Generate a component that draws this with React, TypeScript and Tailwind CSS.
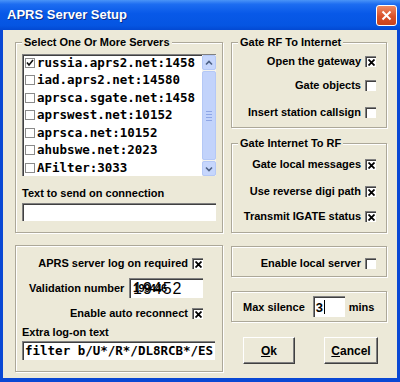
import type { ReactNode } from 'react'

const servers = [
  { name: 'russia.aprs2.net:1458', checked: true },
  { name: 'iad.aprs2.net:14580', checked: false },
  { name: 'aprsca.sgate.net:1458', checked: false },
  { name: 'aprswest.net:10152', checked: false },
  { name: 'aprsca.net:10152', checked: false },
  { name: 'ahubswe.net:2023', checked: false },
  { name: 'AFilter:3033', checked: false },
]

const etched = 'border border-[#aca899] shadow-[1px_1px_0_#fff,inset_1px_1px_0_#fff]'
const sunken =
  'border-t border-l border-[#808080] border-r-white border-b-white shadow-[inset_1px_1px_0_#404040]'

const XBox = ({ checked = false }: { checked?: boolean }) => (
  <span
    className={`inline-flex h-[11px] w-[11px] shrink-0 items-center justify-center bg-white ${sunken}`}
  >
    {checked && (
      <svg width="7" height="7" viewBox="0 0 7 7" className="ml-[1px] mt-[1px]">
        <path d="M0.5 0.5 L6.5 6.5 M6.5 0.5 L0.5 6.5" stroke="#000" strokeWidth="1.8" />
      </svg>
    )}
  </span>
)

const ListCheck = ({ checked }: { checked: boolean }) => (
  <span className="inline-flex h-[10px] w-[10px] shrink-0 items-center justify-center border border-[#8a8a8a] bg-white">
    {checked && (
      <svg width="8" height="8" viewBox="0 0 8 8">
        <path d="M1 3.5 L3 6 L7 1" fill="none" stroke="#111" strokeWidth="1.6" />
      </svg>
    )}
  </span>
)

const CheckRow = ({
  label,
  checked,
  className = '',
}: {
  label: string
  checked?: boolean
  className?: string
}) => (
  <div className={`flex h-[16px] items-center justify-end gap-[4px] ${className}`}>
    <span className="text-[11px] font-bold leading-[14px] text-black">{label}</span>
    <XBox checked={checked} />
  </div>
)

const GroupBox = ({
  title,
  className = '',
  children,
}: {
  title?: string
  className?: string
  children: ReactNode
}) => (
  <div className={`relative ${etched} ${className}`}>
    {title && (
      <span className="absolute -top-[8px] left-[6px] bg-[#ece9d8] px-[2px] text-[11px] font-bold leading-[14px] text-black">
        {title}
      </span>
    )}
    {children}
  </div>
)

const Chevron = ({ down = false }: { down?: boolean }) => (
  <svg width="8" height="6" viewBox="0 0 8 6">
    <path
      d={down ? 'M1 1.5 L4 4.5 L7 1.5' : 'M1 4.5 L4 1.5 L7 4.5'}
      fill="none"
      stroke="#4d6185"
      strokeWidth="1.6"
    />
  </svg>
)

const ScrollBar = () => (
  <div className="flex h-full w-[14px] shrink-0 flex-col bg-[#f4f3ee]">
    <div className="flex h-[15px] items-center justify-center rounded-[2px] border border-[#b4c8f6] bg-[#c6d6fc]">
      <Chevron />
    </div>
    <div className="my-[1px] flex flex-1 flex-col items-center justify-center gap-[2px] rounded-[2px] border border-[#b4c8f6] bg-[#c2d3fb]">
      <span className="h-px w-[6px] bg-[#8ea6e6]" />
      <span className="h-px w-[6px] bg-[#8ea6e6]" />
      <span className="h-px w-[6px] bg-[#8ea6e6]" />
      <span className="h-px w-[6px] bg-[#8ea6e6]" />
    </div>
    <div className="flex h-[15px] items-center justify-center rounded-[2px] border border-[#b4c8f6] bg-[#c6d6fc]">
      <Chevron down />
    </div>
  </div>
)

const Button = ({ first, rest, className = '' }: { first: string; rest: string; className?: string }) => (
  <div
    className={`flex h-[27px] items-center justify-center border border-t-white border-l-white border-r-[#404040] border-b-[#404040] bg-[#ece9d8] shadow-[inset_-1px_-1px_0_#808080] ${className}`}
  >
    <span className="text-[12px] font-bold leading-[14px] text-black">
      <span className="underline">{first}</span>
      {rest}
    </span>
  </div>
)

export default function App() {
  return (
    <div className="flex h-[382px] w-[400px] flex-col overflow-hidden bg-[#0a48d4] font-['Liberation_Sans',Arial,sans-serif]">
      <div className="flex h-[30px] shrink-0 items-center justify-between bg-[linear-gradient(to_bottom,#4a94f7_0%,#1d6df1_14%,#0859e8_45%,#0555e2_85%,#0349d2_100%)] pl-[7px] pr-[3px]">
        <span className="text-[13px] font-bold text-white [text-shadow:1px_1px_0_#0a2f8a]">
          APRS Server Setup
        </span>
        <div className="flex h-[21px] w-[21px] items-center justify-center rounded-[3px] border border-white bg-[linear-gradient(to_bottom,#ee8a64,#d9512a_55%,#c9431d)]">
          <svg width="11" height="11" viewBox="0 0 11 11">
            <path d="M1.5 1.5 L9.5 9.5 M9.5 1.5 L1.5 9.5" stroke="#fff" strokeWidth="2" />
          </svg>
        </div>
      </div>

      <div className="mx-[3px] mb-[4px] flex flex-1 gap-[8px] bg-[#ece9d8] pl-[12px] pr-[10px]">
        <div className="flex w-[208px] flex-col">
          <GroupBox title="Select One Or More Servers" className="mt-[12px] h-[191px] px-[6px] pt-[11px]">
            <div className={`flex h-[122px] bg-white ${sunken} border-r-[#d4d0c8] border-b-[#d4d0c8] pl-[2px]`}>
              <div className="flex-1 overflow-hidden">
                <div className="-mt-[1px]">
                  {servers.map((server) => (
                    <div key={server.name} className="flex h-[17.5px] items-center gap-[2px]">
                      <ListCheck checked={server.checked} />
                      <span className="whitespace-nowrap font-['DejaVu_Sans_Mono',monospace] text-[12.5px] font-bold leading-[16px] text-black">
                        {server.name}
                      </span>
                    </div>
                  ))}
                </div>
              </div>
              <ScrollBar />
            </div>
            <div className="mt-[10px] text-[11px] font-bold leading-[14px] text-black">
              Text to send on connection
            </div>
            <div className={`mt-[3px] h-[18px] bg-white ${sunken}`} />
          </GroupBox>

          <GroupBox className="mt-[12px] h-[127px] pt-[9px]">
            <CheckRow label="APRS server log on required" checked className="pr-[19px]" />
            <div className="mt-[7px] flex h-[20px] items-center pl-[13px] pr-[19px]">
              <span className="text-[11px] font-bold leading-[14px] text-black">Validation number</span>
              <div className={`relative ml-auto h-[20px] w-[74px] bg-white ${sunken}`}>
                <span className="absolute left-[3px] top-[1px] font-['Liberation_Sans',sans-serif] text-[16px] leading-[18px] tracking-[1px] text-black">
                  19452
                </span>
                <span className="absolute left-[3px] top-[3px] text-[11px] font-bold leading-[12px] tracking-[-0.5px] text-black">
                  199446
                </span>
              </div>
            </div>
            <CheckRow label="Enable auto reconnect" checked className="mt-[7px] pr-[19px]" />
            <div className="mt-[4px] px-[6px] text-[11px] font-bold leading-[14px] text-black">
              Extra log-on text
            </div>
            <div className="mt-[2px] px-[6px] pr-[7px]">
              <div className={`flex h-[19px] items-center bg-white pl-[2px] ${sunken}`}>
                <span className="whitespace-nowrap font-['DejaVu_Sans_Mono',monospace] text-[12.5px] font-bold leading-[16px] text-black">
                  filter b/U*/R*/DL8RCB*/ES
                </span>
              </div>
            </div>
          </GroupBox>
        </div>

        <div className="flex w-[156px] flex-col">
          <GroupBox title="Gate RF To Internet" className="mt-[12px] h-[86px] pr-[10px] pt-[10px]">
            <CheckRow label="Open the gateway" checked />
            <CheckRow label="Gate objects" className="mt-[8px]" />
            <CheckRow label="Insert station callsign" className="mt-[11px]" />
          </GroupBox>

          <GroupBox title="Gate Internet To RF" className="mt-[15px] h-[90px] pr-[10px] pt-[12px]">
            <CheckRow label="Gate local messages" checked />
            <CheckRow label="Use reverse digi path" checked className="mt-[11px]" />
            <CheckRow label="Transmit IGATE status" checked className="mt-[9px]" />
          </GroupBox>

          <GroupBox className="mt-[13px] h-[31px] pr-[10px] pt-[8px]">
            <CheckRow label="Enable local server" />
          </GroupBox>

          <GroupBox className="mt-[14px] flex h-[31px] items-center pl-[11px]">
            <span className="text-[11px] font-bold leading-[14px] text-black">Max silence</span>
            <div className={`ml-[8px] flex h-[21px] w-[32px] items-center bg-white pl-[2px] ${sunken}`}>
              <span className="text-[13px] font-bold leading-[15px] text-black">3</span>
              <span className="ml-[1px] h-[14px] w-px bg-black" />
            </div>
            <span className="ml-[4px] text-[11px] font-bold leading-[14px] text-black">mins</span>
          </GroupBox>

          <div className="mt-[15px] flex gap-[29px] pl-[12px]">
            <Button first="O" rest="k" className="w-[52px]" />
            <Button first="C" rest="ancel" className="w-[54px]" />
          </div>
        </div>
      </div>
    </div>
  )
}
